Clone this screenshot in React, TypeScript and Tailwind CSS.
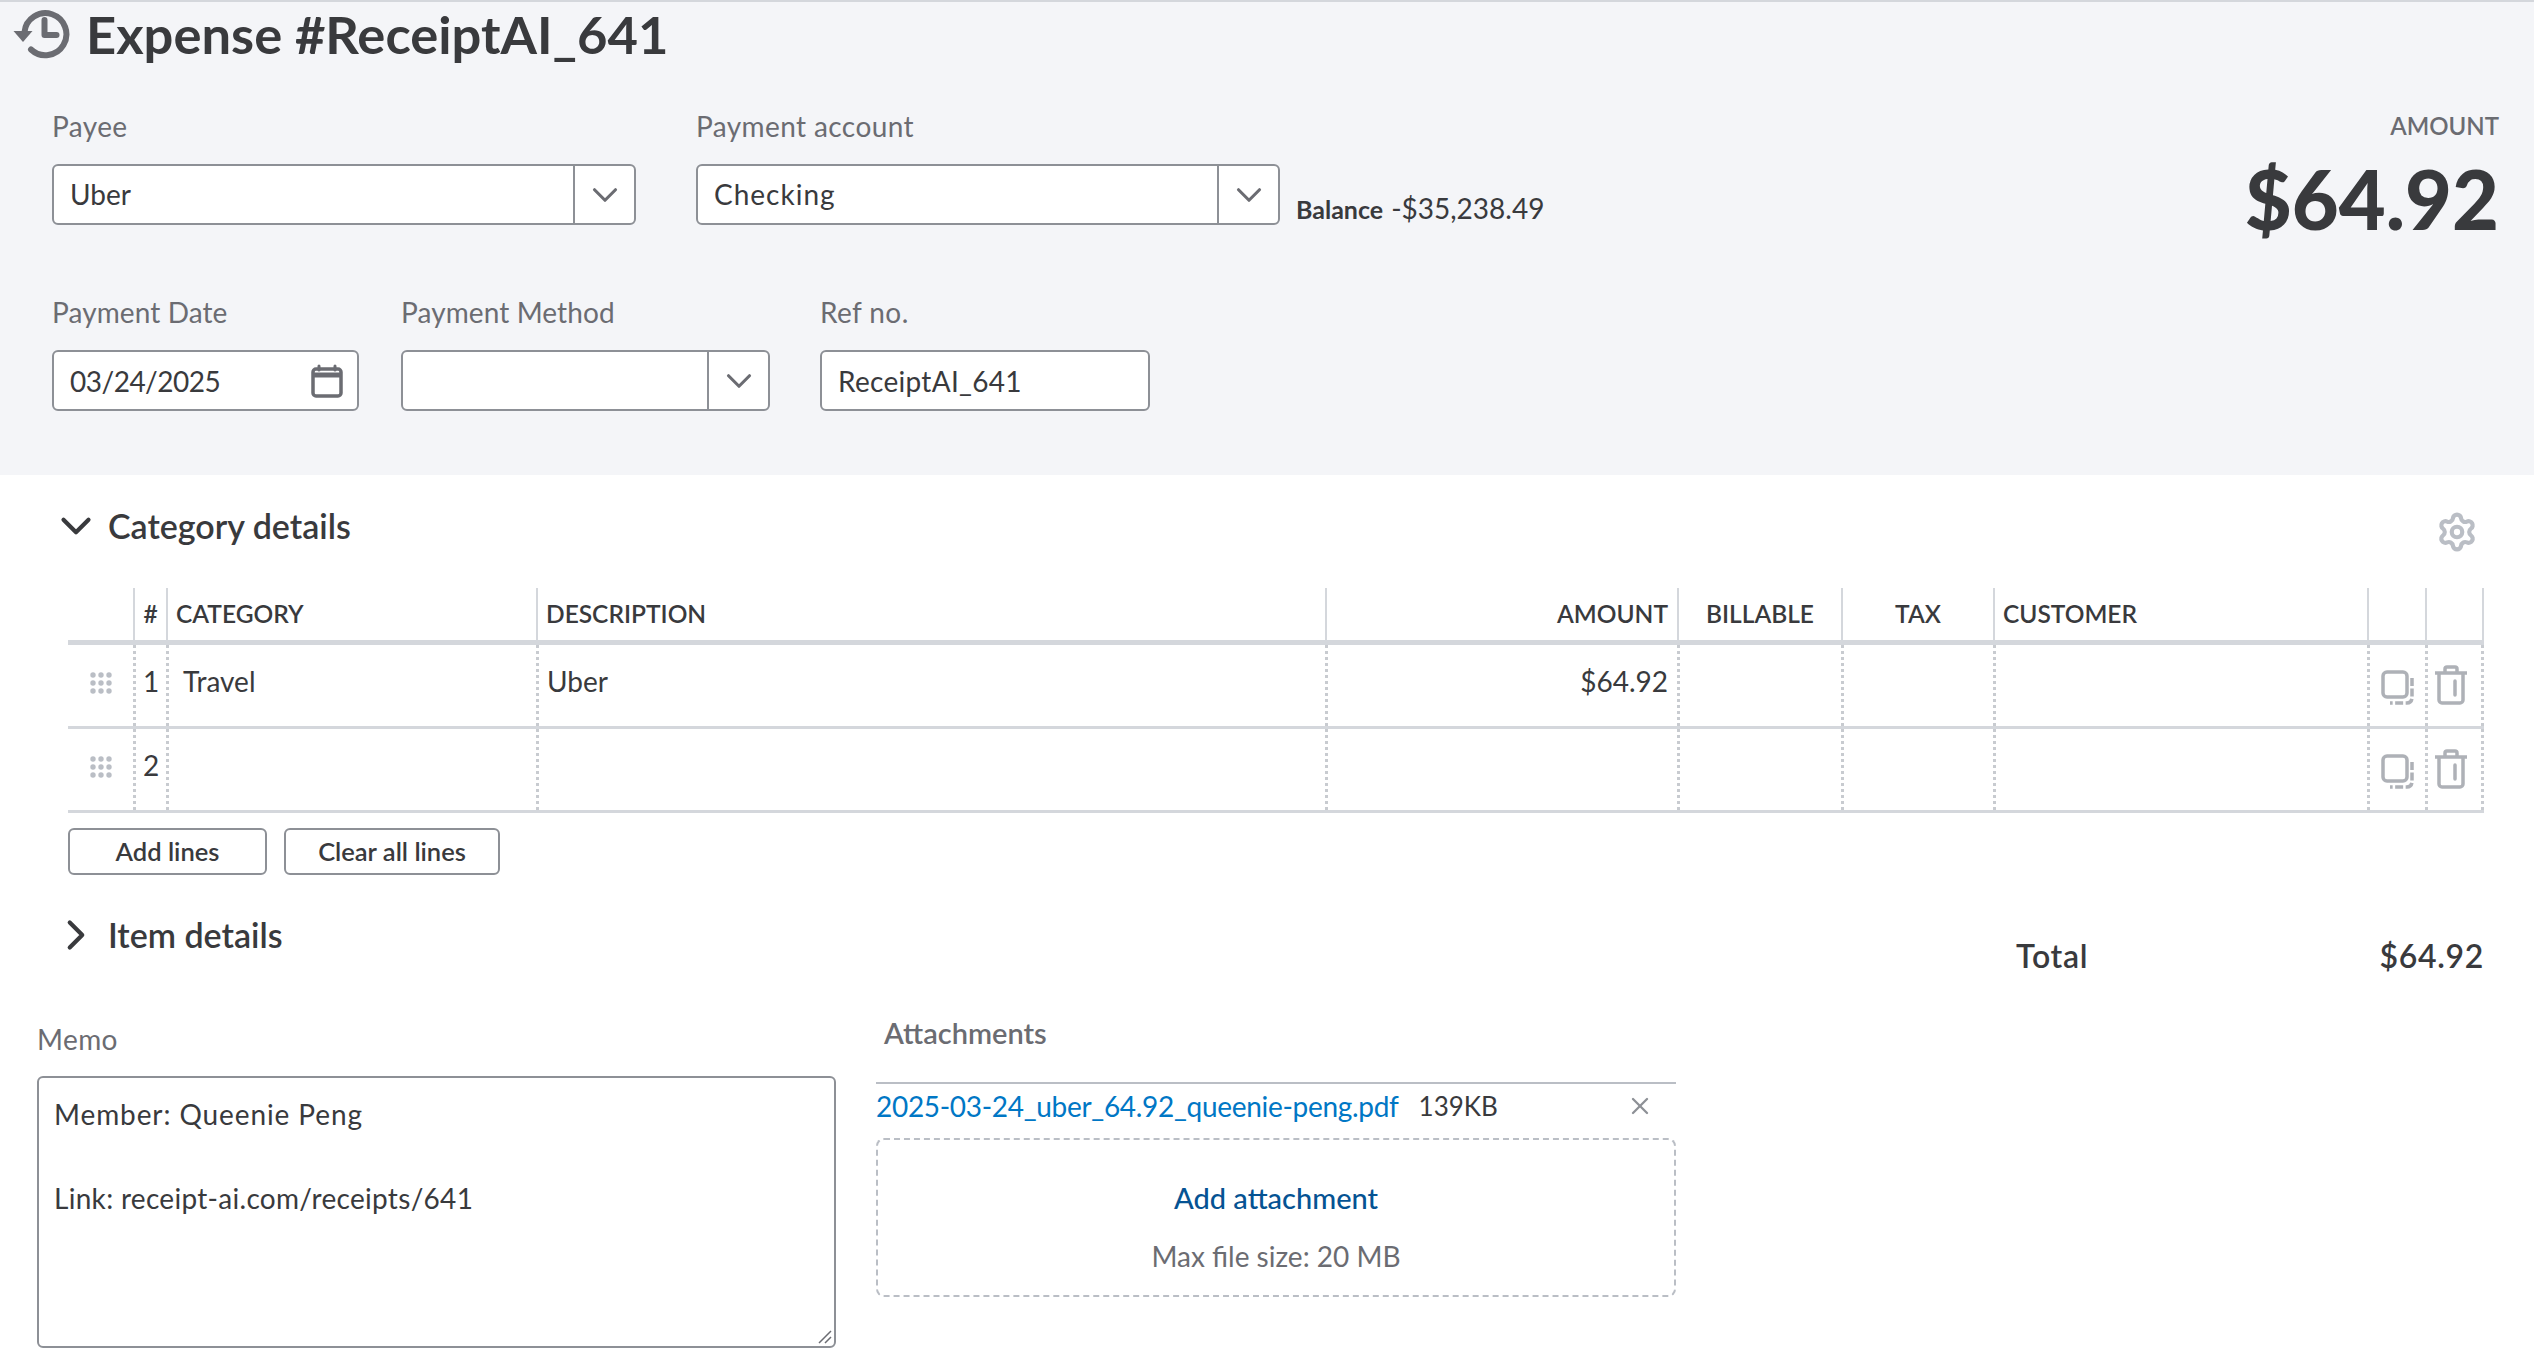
import React from 'react';
import { ChevronDown, ChevronRight, Settings, X } from 'lucide-react';

const HistoryIcon = () => (
  <svg viewBox="0 0 56 56" className="w-[57px] h-[56px] shrink-0" fill="none">
    <path d="M11 26a21 21 0 1 1 6.5 17.5" stroke="#6b6c72" strokeWidth="6" strokeLinecap="round" />
    <path d="M0 25h19l-9.500 11z" fill="#6b6c72" />
    <path d="M31 14v15h12" stroke="#6b6c72" strokeWidth="6" strokeLinecap="round" strokeLinejoin="round" />
  </svg>
);

const CalendarIcon = () => (
  <svg viewBox="0 0 32 34" className="w-[32px] h-[34px]" fill="none">
    <rect x="2" y="5" width="28" height="27" rx="3" stroke="#6b6c72" strokeWidth="3.500" />
    <path d="M2 11h28" stroke="#6b6c72" strokeWidth="5" />
    <path d="M8 2v4M24 2v4" stroke="#6b6c72" strokeWidth="3" strokeLinecap="round" />
  </svg>
);

const GripIcon = () => (
  <svg viewBox="0 0 22 22" className="w-[22px] h-[22px]" fill="#babec5">
    {[3, 11, 19].map((y) =>
      [3, 11, 19].map((x) => <circle key={`${x}-${y}`} cx={x} cy={y} r="2.700" />),
    )}
  </svg>
);

const CopyIcon = () => (
  <svg viewBox="0 0 34 36" className="w-[34px] h-[36px]" fill="none" stroke="#aeb1b7">
    <rect x="2" y="2" width="24" height="25" rx="4" strokeWidth="3.500" />
    <path d="M31 8v20a5 5 0 0 1-5 5H9" strokeWidth="3.500" strokeDasharray="8 2.500" />
  </svg>
);

const TrashIcon = () => (
  <svg viewBox="0 0 34 40" className="w-[34px] h-[40px]" fill="none" stroke="#aeb1b7" strokeWidth="3.500">
    <path d="M1 8h32" />
    <path d="M11 7V4a2 2 0 0 1 2-2h8a2 2 0 0 1 2 2v3" />
    <path d="M5 8v27a3 3 0 0 0 3 3h18a3 3 0 0 0 3-3V8" />
    <path d="M21 16v14" strokeLinecap="round" />
  </svg>
);

const Field = ({ label, className, labelClass, children }: { label: string; className: string; labelClass?: string; children: React.ReactNode }) => (
  <div className={className}>
    <div className={`h-[38px] text-[28px] leading-[38px] text-[#6b6c72] ${labelClass ?? 'tracking-[0.4px]'}`}>{label}</div>
    <div className="mt-[19px] h-[61px]">{children}</div>
  </div>
);

const Select = ({ value, className }: { value?: string; className?: string }) => (
  <div className="flex h-full rounded-[6px] border-2 border-[#8d9096] bg-white text-[28px] text-[#393a3d]">
    <div className={`flex flex-1 items-center pb-[2px] pl-[16px] ${className ?? ''}`}>{value}</div>
    <div className="flex w-[61px] items-center justify-center border-l-2 border-[#8d9096]">
      <ChevronDown className="w-[42px] h-[42px] text-[#6b6c72]" strokeWidth={1.8} />
    </div>
  </div>
);

const gridCols =
  'grid grid-cols-[65px_33px_370px_789px_352px_164px_152px_374px_58px_59px]';

const head = [
  { t: '' },
  { t: '#', c: 'justify-center' },
  { t: 'CATEGORY', c: 'pl-[8px]' },
  { t: 'DESCRIPTION', c: 'pl-[8px]' },
  { t: 'AMOUNT', c: 'justify-end pr-[9px]' },
  { t: 'BILLABLE', c: 'justify-center' },
  { t: 'TAX', c: 'justify-center' },
  { t: 'CUSTOMER', c: 'pl-[8px]' },
  { t: '' },
  { t: '' },
];

const Row = ({ n, category, description, amount }: { n: number; category?: string; description?: string; amount?: string }) => {
  const cell = 'border-l-[3px] border-dotted border-[#c8cbd0] pt-[18px] text-[28px] leading-[36px] text-[#393a3d]';
  return (
    <div className={`${gridCols} h-[84px] border-b-[3px] border-[#d4d7dc]`}>
      <div className="flex items-start justify-center pt-[27px]">
        <GripIcon />
      </div>
      <div className={`${cell} text-center`}>{n}</div>
      <div className={`${cell} pl-[14px]`}>{category}</div>
      <div className={`${cell} pl-[8px]`}>{description}</div>
      <div className={`${cell} pr-[9px] text-right`}>{amount}</div>
      <div className={cell} />
      <div className={cell} />
      <div className={cell} />
      <div className={`${cell} flex items-start justify-center !pt-[25px]`}>
        <CopyIcon />
      </div>
      <div className={`${cell} flex items-start justify-center border-r-[3px] !pt-[20px] pr-[8px]`}>
        <TrashIcon />
      </div>
    </div>
  );
};

export default function App() {
  return (
    <div className="w-[2534px] h-[1362px] overflow-hidden bg-white font-['Lato',sans-serif]">
      {/* Header */}
      <div className="h-[475px] border-t-2 border-[#d4d7dc] bg-[#f4f5f8] pl-[13px] pr-[35px]">
        <div className="flex h-[64px] items-center gap-[16px]">
          <HistoryIcon />
          <h1 className="text-[52.5px] font-bold leading-[64px] text-[#393a3d]">Expense #ReceiptAI_641</h1>
        </div>
        <div className="mt-[41px] flex justify-between pl-[39px]">
          <div>
            <div className="flex">
              <Field label="Payee" className="w-[584px]">
                <Select value="Uber" />
              </Field>
              <Field label="Payment account" className="ml-[60px] w-[584px]">
                <Select value="Checking" className="tracking-[1px]" />
              </Field>
              <div className="ml-[16px] mt-[80px] flex items-baseline gap-[8px] text-[#393a3d]">
                <span className="text-[25px] font-bold">Balance</span>
                <span className="text-[28px]">-$35,238.49</span>
              </div>
            </div>
            <div className="mt-[64px] flex">
              <Field label="Payment Date" labelClass="tracking-[0.1px]" className="w-[307px]">
                <div className="flex h-full items-center justify-between rounded-[6px] border-2 border-[#8d9096] bg-white pl-[16px] pr-[14px] text-[28px] tracking-[-0.5px] text-[#393a3d]">
                  03/24/2025
                  <CalendarIcon />
                </div>
              </Field>
              <Field label="Payment Method" labelClass="tracking-[0.1px]" className="ml-[42px] w-[369px]">
                <Select />
              </Field>
              <Field label="Ref no." className="ml-[50px] w-[330px]">
                <div className="flex h-full items-center rounded-[6px] border-2 border-[#8d9096] bg-white pl-[16px] text-[28px] tracking-[0.3px] text-[#393a3d]">
                  ReceiptAI_641
                </div>
              </Field>
            </div>
          </div>
          <div className="text-right text-[#393a3d]">
            <div className="h-[38px] text-[24px] font-semibold leading-[38px] text-[#6b6c72]">AMOUNT</div>
            <div className="mt-[9px] text-[81px] font-black leading-[90px]">$64.92</div>
          </div>
        </div>
      </div>

      {/* Category details */}
      <div className="relative pl-[68px] pr-[50px]">
        <div className="flex h-[113px] items-start justify-between pt-[26px]">
          <div className="flex items-center gap-[14px] text-[#393a3d]">
            <ChevronDown className="-ml-[17px] w-[50px] h-[50px]" strokeWidth={2} />
            <span className="-ml-[7px] text-[34px] font-semibold leading-[44px]">Category details</span>
          </div>
          <Settings className="mr-[6px] mt-[10px] w-[42px] h-[42px] text-[#babec5]" strokeWidth={2.4} />
        </div>
        <div className={`${gridCols} h-[57px] border-b-[5px] border-[#d4d7dc]`}>
          {head.map((h, i) => (
            <div
              key={i}
              className={`flex items-center text-[24.5px] font-semibold text-[#393a3d] ${i > 0 ? 'border-l-2 border-[#d4d7dc]' : ''} ${i === 9 ? 'border-r-2' : ''} ${h.c ?? ''}`}
            >
              {h.t}
            </div>
          ))}
        </div>
        <Row n={1} category="Travel" description="Uber" amount="$64.92" />
        <Row n={2} />

        <div className="mt-[15px] flex gap-[17px]">
          <button className="h-[47px] w-[199px] rounded-[6px] border-2 border-[#8d9096] text-[25.500px] font-semibold text-[#393a3d]">Add lines</button>
          <button className="h-[47px] w-[216px] rounded-[6px] border-2 border-[#8d9096] text-[25.500px] font-semibold text-[#393a3d]">Clear all lines</button>
        </div>

        <div className="mt-[35px] flex items-start justify-between text-[#393a3d]">
          <div className="flex items-center gap-[14px]">
            <ChevronRight className="-ml-[17px] w-[50px] h-[50px]" strokeWidth={2} />
            <span className="-ml-[7px] text-[34px] font-semibold leading-[44px]">Item details</span>
          </div>
          <div className="mt-[24px] flex w-[468px] justify-between text-[32px] font-semibold leading-[44px] tracking-[0.7px]">
            <span>Total</span>
            <span>$64.92</span>
          </div>
        </div>
      </div>

      {/* Memo and attachments */}
      <div className="mt-[40px] flex items-start pl-[37px]">
        <div className="w-[799px]">
          <div className="h-[38px] pt-[2px] text-[28px] leading-[38px] tracking-[0.4px] text-[#6b6c72]">Memo</div>
          <div className="relative mt-[20px] h-[272px] rounded-[6px] border-2 border-[#8d9096] bg-white px-[15px] pt-[15px] text-[28px] leading-[42px] text-[#393a3d]">
            <div className="tracking-[0.9px]">Member: Queenie Peng</div>
            <div className="mt-[42px] tracking-[0.3px]">Link: receipt-ai.com/receipts/641</div>
            <svg viewBox="0 0 14 14" className="absolute bottom-[2px] right-[2px] w-[14px] h-[14px]" stroke="#6b6c72" strokeWidth="1.500">
              <path d="M1 13 13 1M7 13l6-6" />
            </svg>
          </div>
        </div>
        <div className="ml-[40px] w-[800px]">
          <div className="-mt-[5px] h-[40px] pl-[8px] text-[29px] font-semibold leading-[40px] text-[#6b6c72]">Attachments</div>
          <div className="mt-[29px] flex h-[56px] items-center border-t-2 border-[#babec5] pb-[10px] text-[28px]">
            <span className="tracking-[-0.3px] text-[#0077c5]">2025-03-24_uber_64.92_queenie-peng.pdf</span>
            <span className="ml-[20px] text-[26px] text-[#393a3d]">139KB</span>
            <X className="ml-auto mr-[22px] w-[28px] h-[28px] text-[#8d9096]" strokeWidth={2} />
          </div>
          <div className="flex h-[159px] flex-col items-center rounded-[8px] border-2 border-dashed border-[#babec5] pt-[38px]">
            <span className="text-[29px] font-medium leading-[40px] text-[#055393]">Add attachment</span>
            <span className="mt-[18px] text-[28px] leading-[40px] text-[#6b6c72]">Max file size: 20 MB</span>
          </div>
        </div>
      </div>
    </div>
  );
}
